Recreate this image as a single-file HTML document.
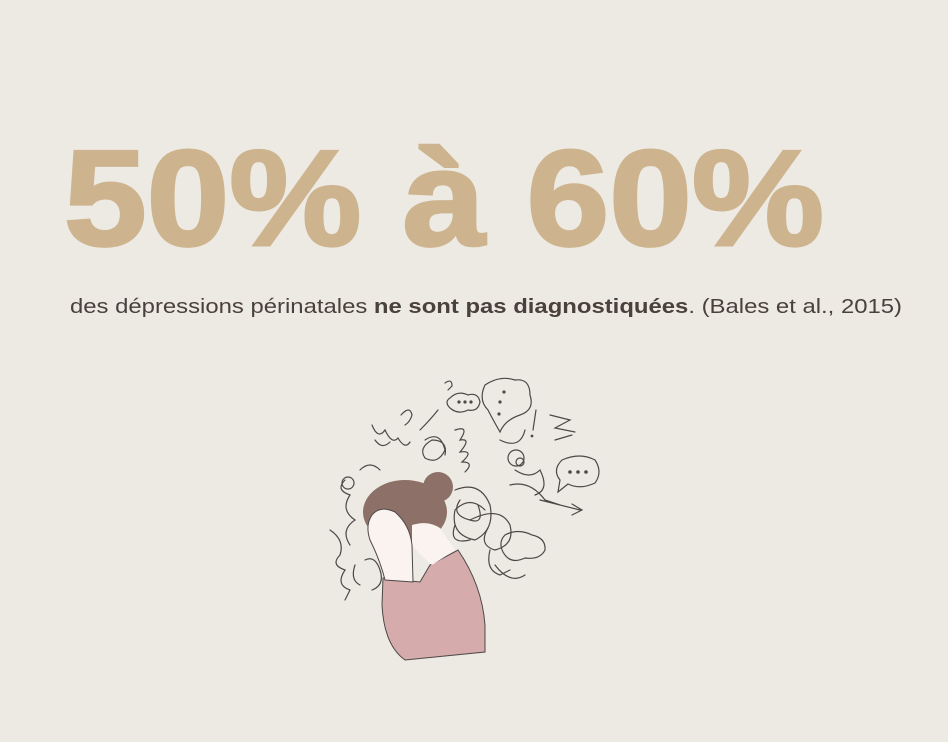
<!DOCTYPE html>
<html><head><meta charset="utf-8"><style>
html,body{margin:0;padding:0;background:#edeae4;width:948px;height:742px;overflow:hidden}
svg{display:block}
</style></head><body>
<svg width="948" height="742" viewBox="0 0 948 742">
<rect width="948" height="742" fill="#edeae4"/>
<text x="64" y="245" font-family="Liberation Sans, sans-serif" font-weight="bold" font-size="136" fill="#cdb48e" stroke="#cdb48e" stroke-width="3" textLength="760" lengthAdjust="spacingAndGlyphs">50% à 60%</text>
<text x="70" y="313" font-family="Liberation Sans, sans-serif" font-size="20" fill="#4a403c" textLength="832" lengthAdjust="spacingAndGlyphs">des dépressions périnatales <tspan font-weight="bold">ne sont pas diagnostiquées</tspan>. (Bales et al., 2015)</text>
<g fill="none" stroke="#4d4846" stroke-width="1.2" stroke-linecap="round">
<path d="M485,385 Q500,375 515,380 Q530,378 530,395 Q535,410 520,415 Q505,420 500,432 Q492,418 488,410 Q478,400 485,385Z"/>
<circle cx="504" cy="392" r="1" fill="#4d4846"/><circle cx="500" cy="402" r="1" fill="#4d4846"/><circle cx="499" cy="414" r="1" fill="#4d4846"/>
<path d="M450,398 Q458,390 468,395 Q478,392 480,402 Q478,412 468,410 Q458,415 450,408 Q444,402 450,398Z"/>
<circle cx="459" cy="402" r="1" fill="#4d4846"/><circle cx="465" cy="402" r="1" fill="#4d4846"/><circle cx="471" cy="402" r="1" fill="#4d4846"/>
<path d="M562,460 Q580,452 595,460 Q603,472 595,483 Q580,490 568,484 L558,492 L560,480 Q552,470 562,460Z"/>
<circle cx="570" cy="472" r="1.2" fill="#4d4846"/><circle cx="578" cy="472" r="1.2" fill="#4d4846"/><circle cx="586" cy="472" r="1.2" fill="#4d4846"/>
<path d="M505,535 Q518,528 532,535 Q546,538 545,550 Q540,560 525,558 Q510,565 503,552 Q498,542 505,535Z"/>
<path d="M372,425 Q378,440 385,430 Q392,445 398,438 Q405,450 410,442 M375,440 Q382,450 390,442"/>
<path d="M425,440 Q440,430 445,450 Q438,465 425,458 Q418,448 432,440 Q448,440 445,455 M420,430 Q430,420 438,410"/>
<path d="M455,430 Q470,425 460,440 Q472,438 460,452 Q475,450 462,462 Q475,462 465,472"/>
<path d="M550,415 L570,420 L555,428 L575,432 M555,440 L572,435"/>
<path d="M345,480 Q335,490 350,495 Q340,510 355,520 Q340,530 350,545 M360,470 Q370,460 380,470"/>
<path d="M330,530 Q345,540 340,555 Q330,565 345,570 Q335,585 350,590 M345,600 L350,590"/>
<path d="M455,490 Q480,480 490,505 Q495,530 475,540 Q450,535 455,510 Q470,495 485,510"/>
<path d="M460,500 Q450,515 470,520 Q485,525 478,505 M455,525 Q448,545 470,540"/>
<path d="M470,520 Q500,505 510,525 Q515,545 495,550 Q478,545 488,528"/>
<path d="M510,485 Q530,480 545,500 L560,505 M540,500 L580,510 M572,504 L582,510 L572,515"/>
<path d="M490,550 Q485,570 500,575 L510,570 M495,565 Q510,585 525,575"/>
<path d="M365,560 Q375,555 380,570 Q385,585 372,590 M355,565 Q350,580 360,585"/>
<path d="M500,440 Q520,450 525,430 M515,470 Q530,480 540,470 Q550,490 535,495"/>
<circle cx="348" cy="483" r="6"/><circle cx="516" cy="458" r="8"/><circle cx="520" cy="462" r="4"/>
<path d="M536,410 L533,430"/><circle cx="532" cy="436" r="0.8" fill="#4d4846"/><path d="M401,415 Q410,405 412,415 Q410,422 405,425"/>
<path d="M445,383 Q452,378 452,386 L448,390"/>
</g>
<ellipse cx="405" cy="512" rx="42" ry="32" fill="#8d7168"/>
<circle cx="438" cy="487" r="15" fill="#8d7168"/>
<path d="M383,578 L420,582 L430,565 L458,550 Q482,585 485,625 L485,652 L405,660 Q384,645 382,605 Z" fill="#d5abab" stroke="#4d4846" stroke-width="1"/>
<path d="M412,525 Q428,520 440,528 L455,550 L432,565 Q420,555 412,545Z" fill="#fbf3f0"/>
<path d="M372,515 Q380,505 395,512 Q410,525 412,545 L413,582 L385,580 Q380,560 370,540 Q365,525 372,515Z" fill="#fbf3f0" stroke="#4d4846" stroke-width="1"/>
</svg>
</body></html>
